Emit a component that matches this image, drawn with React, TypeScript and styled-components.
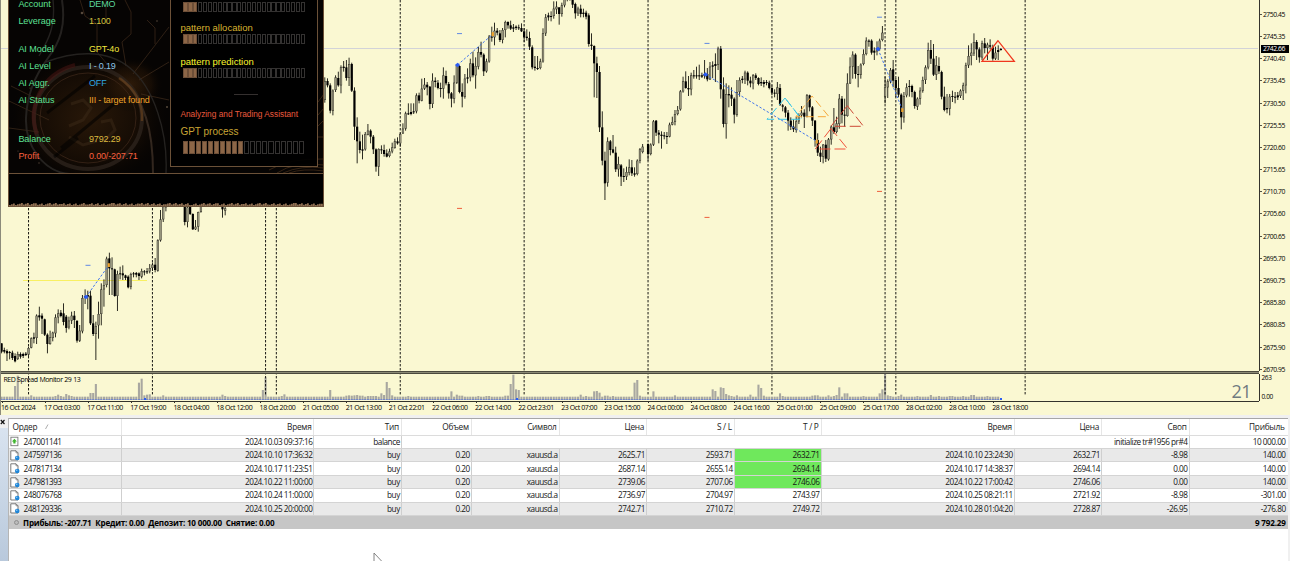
import React from 'react';
import styled, { createGlobalStyle } from 'styled-components';

type Bar = [number, number, number, number];

interface Segment {
    start: number;
    base: number;
    bars: Bar[];
}

interface HistoryRow {
    order: string;
    openTime: string;
    type: string;
    volume: string;
    symbol: string;
    openPrice: string;
    sl: string;
    tp: string;
    closeTime: string;
    closePrice: string;
    swap: string;
    profit: string;
    hit?: boolean;
}

const BAR_STEP = 2.6935;
const BAR_OFFSET = 1.6;
const PLOT_WIDTH = 1257;
const PRICE_HEIGHT = 371;
const SPREAD_HEIGHT = 27;

const barX = (index: number) => BAR_OFFSET + index * BAR_STEP - 1;

// high, low, open, close in thirds of a pixel from the top of the plot
const segments: Segment[] = [
    {
        start: 0,
        base: 600,
        bars: [
            [430, 460, 430, 455], [443, 460, 450, 455], [448, 483, 453, 460], [453, 478, 456, 458], [452, 480, 458, 474],
            [460, 487, 468, 484], [455, 480, 477, 462], [457, 476, 462, 470], [458, 474, 468, 462], [456, 468, 465, 461],
            [440, 468, 464, 444], [412, 445, 443, 415], [398, 430, 416, 412], [343, 432, 414, 347], [320, 362, 346, 352],
            [340, 402, 347, 356], [356, 408, 358, 404], [400, 460, 404, 432], [392, 434, 432, 412], [395, 424, 414, 398],
            [343, 412, 400, 352], [328, 370, 352, 340], [330, 352, 338, 348], [310, 376, 340, 366], [345, 398, 350, 384],
            [350, 388, 382, 362], [335, 372, 362, 347], [333, 384, 347, 360], [362, 428, 362, 422], [375, 426, 422, 392],
            [285, 400, 394, 294], [268, 312, 292, 288], [272, 328, 290, 285], [272, 375, 287, 370], [345, 408, 370, 402],
            [365, 480, 402, 378], [305, 416, 376, 342], [250, 376, 342, 268], [238, 320, 268, 255], [170, 262, 255, 176],
            [158, 285, 175, 205], [172, 285, 205, 206], [206, 290, 208, 288], [212, 333, 288, 222], [200, 238, 222, 220],
            [196, 240, 220, 226], [224, 240, 226, 234], [226, 265, 230, 262], [218, 268, 260, 222], [216, 232, 222, 220],
            [216, 232, 219, 224], [217, 240, 220, 228], [206, 235, 230, 213], [210, 226, 214, 216], [204, 222, 216, 214],
            [192, 220, 214, 204], [188, 213, 204, 194], [174, 217, 194, 210], [118, 215, 212, 121], [30, 125, 121, 58],
            [0, 66, 58, 20], [0, 34, 22, 10],
        ],
    },
    {
        start: 68,
        base: 600,
        bars: [
            [0, 76, 0, 66], [20, 82, 66, 22], [0, 45, 0, 42], [40, 90, 42, 88], [60, 90, 88, 80], [35, 95, 80, 36], [0, 38, 36, 0],
        ],
    },
    { start: 82, base: 600, bars: [[0, 53, 0, 28], [20, 46, 32, 25]] },
    {
        start: 120,
        base: 0,
        bars: [
            [232, 308, 300, 243], [235, 262, 243, 256], [250, 340, 256, 332], [268, 346, 332, 272], [226, 276, 270, 232],
            [215, 260, 234, 256], [196, 280, 256, 202], [183, 215, 204, 200], [180, 242, 202, 234], [173, 258, 234, 192],
            [188, 276, 192, 272], [262, 420, 272, 380], [352, 490, 380, 424], [395, 460, 424, 450], [404, 478, 452, 448],
            [396, 452, 448, 402], [372, 406, 404, 392], [388, 430, 392, 410], [405, 462, 410, 448], [445, 515, 448, 500],
            [445, 528, 500, 447], [436, 462, 450, 448], [434, 470, 450, 462], [448, 472, 460, 470], [446, 472, 468, 454],
            [428, 460, 454, 442], [416, 446, 444, 424], [412, 434, 424, 430], [398, 440, 430, 402], [370, 402, 400, 386],
            [335, 392, 386, 340], [310, 345, 340, 340], [310, 346, 342, 336], [310, 342, 336, 334], [280, 340, 334, 286],
            [278, 310, 286, 302], [236, 304, 302, 266], [234, 270, 266, 254], [246, 286, 254, 262], [258, 328, 260, 312],
            [220, 324, 312, 242], [232, 262, 242, 246], [240, 268, 248, 264], [248, 292, 264, 266], [202, 296, 266, 226],
            [212, 256, 228, 250], [246, 296, 252, 280], [276, 322, 280, 296], [226, 310, 296, 248], [192, 252, 248, 196],
            [196, 280, 198, 276], [250, 322, 276, 290], [222, 296, 290, 236], [205, 250, 236, 232], [176, 244, 232, 190],
            [155, 232, 190, 226], [172, 266, 226, 198], [140, 208, 200, 156], [125, 172, 156, 164], [160, 228, 164, 214],
            [176, 218, 214, 184], [105, 188, 184, 110], [80, 125, 110, 112], [68, 136, 112, 92], [84, 106, 92, 98],
            [90, 126, 100, 120], [84, 130, 120, 90], [62, 112, 90, 66], [64, 86, 66, 76], [62, 90, 76, 86],
            [72, 96, 86, 82], [76, 90, 84, 80], [74, 90, 82, 84], [70, 96, 84, 94], [84, 126, 94, 112],
            [88, 122, 110, 114], [95, 150, 114, 140], [136, 208, 142, 202], [168, 212, 204, 200], [168, 210, 204, 206],
            [176, 208, 204, 184], [85, 188, 184, 100], [42, 108, 100, 52], [38, 62, 52, 46], [34, 64, 48, 48],
            [4, 56, 48, 26], [4, 42, 28, 20], [22, 74, 22, 42], [8, 50, 42, 16], [-10, 22, 16, -4],
            [-20, 4, -4, -14], [-30, 2, -14, -20], [-6, 24, -4, 14], [8, 56, 12, 40], [20, 48, 40, 26],
            [14, 52, 26, 42], [26, 52, 42, 38], [32, 58, 38, 50], [40, 140, 46, 132], [100, 150, 134, 138],
            [136, 292, 138, 190], [170, 294, 190, 216], [198, 396, 216, 382], [334, 496, 382, 482], [455, 600, 482, 550],
            [412, 560, 548, 424], [420, 466, 424, 450], [405, 460, 448, 458], [440, 516, 458, 508], [470, 530, 508, 492],
            [492, 558, 496, 530], [505, 546, 528, 530], [500, 540, 530, 516], [478, 526, 518, 502], [480, 528, 502, 520],
            [502, 530, 520, 524], [478, 526, 522, 482], [444, 490, 482, 448], [432, 460, 456, 440],
        ],
    },
    {
        start: 240,
        base: 0,
        bars: [
            [430, 482, 432, 462], [430, 466, 462, 434], [360, 438, 434, 364], [360, 408, 362, 398], [390, 430, 398, 404],
            [394, 446, 404, 408], [396, 418, 406, 408], [396, 432, 408, 410], [368, 412, 410, 374], [350, 376, 374, 366],
            [330, 376, 366, 342], [318, 346, 342, 330], [270, 332, 328, 274], [230, 278, 274, 244], [214, 266, 244, 264],
            [228, 288, 264, 268], [218, 286, 268, 226], [210, 236, 226, 228], [200, 236, 228, 226], [194, 240, 228, 226],
            [218, 234, 226, 230], [180, 236, 228, 222], [204, 244, 222, 238], [186, 240, 238, 200], [184, 234, 200, 196],
            [160, 246, 198, 192], [140, 210, 194, 146], [138, 296, 146, 268], [232, 382, 268, 372], [250, 416, 372, 282],
            [256, 322, 282, 286], [262, 318, 284, 296], [292, 370, 296, 344], [240, 350, 344, 276], [232, 290, 276, 240],
            [228, 250, 240, 236], [212, 252, 238, 218], [214, 256, 218, 242], [230, 262, 242, 250], [222, 268, 250, 226],
            [220, 240, 226, 234], [232, 256, 234, 252], [232, 258, 250, 246], [240, 262, 246, 252], [240, 256, 248, 246],
            [242, 268, 248, 264], [256, 286, 264, 278], [268, 292, 278, 280], [246, 300, 282, 262], [252, 318, 264, 314],
            [312, 334, 316, 320], [318, 352, 322, 338], [330, 392, 338, 362], [352, 390, 362, 380], [358, 396, 380, 388],
            [350, 398, 390, 364], [340, 372, 364, 346], [318, 352, 346, 338], [328, 384, 338, 350], [282, 352, 350, 286],
            [284, 334, 286, 322], [318, 378, 322, 362], [360, 440, 362, 420], [400, 468, 420, 458], [440, 486, 458, 470],
            [432, 490, 470, 434], [420, 486, 434, 476], [414, 482, 478, 418], [376, 434, 418, 380], [324, 402, 382, 396],
            [350, 400, 396, 370], [282, 386, 372, 296], [288, 370, 296, 344], [296, 380, 344, 346], [220, 350, 348, 250],
            [172, 252, 250, 200], [154, 236, 200, 164], [160, 236, 164, 222], [198, 262, 222, 224], [190, 236, 224, 194],
            [148, 196, 192, 162], [112, 166, 162, 122], [118, 140, 122, 124], [118, 164, 122, 158], [142, 180, 158, 152],
            [124, 166, 154, 144], [116, 152, 146, 122], [78, 124, 120, 98], [230, 310, 290, 262], [238, 294, 262, 244],
            [204, 250, 244, 210], [180, 262, 208, 242], [234, 292, 240, 264], [230, 292, 264, 284], [280, 388, 284, 352],
            [276, 368, 352, 288], [250, 292, 286, 262], [240, 290, 260, 258], [254, 292, 258, 276], [272, 326, 276, 318],
            [292, 330, 320, 296], [262, 314, 296, 272], [230, 278, 272, 240], [196, 252, 240, 202], [128, 208, 202, 150],
            [120, 192, 150, 176], [132, 228, 176, 224], [168, 240, 224, 196], [172, 222, 198, 214], [212, 298, 216, 290],
            [260, 334, 290, 330], [282, 340, 328, 324], [282, 346, 326, 290], [272, 306, 290, 288], [276, 310, 290, 292],
            [276, 300, 292, 286], [268, 294, 288, 272], [248, 300, 272, 256], [188, 280, 256, 196], [136, 204, 196, 168],
            [130, 196, 168, 158], [100, 168, 160, 126], [120, 180, 126, 148], [142, 188, 148, 172], [122, 180, 172, 130],
            [114, 160, 130, 144], [128, 180, 144, 134], [118, 148, 136, 140], [134, 182, 142, 176], [140, 180, 176, 158],
            [136, 180, 156, 150], [144, 152, 147, 149],
        ],
    },
];

// bars of the spread indicator that rise over the flat level
const spreadPeaks: { [index: number]: number } = {
    5: 42, 6: 73, 11: 14, 20: 12, 21: 16, 22: 12, 24: 18, 25: 14, 26: 12, 33: 21, 34: 21, 35: 48, 51: 52, 52: 64, 53: 14,
    54: 16, 55: 17, 60: 14, 82: 16, 83: 12, 97: 30, 98: 68, 104: 12, 105: 17, 122: 30, 128: 13, 129: 14, 130: 13, 131: 14,
    132: 15, 133: 13, 134: 13, 136: 12, 137: 12, 138: 12, 139: 12, 141: 20, 142: 15, 143: 54, 144: 36, 145: 14, 151: 12,
    167: 26, 169: 16, 170: 13, 171: 13, 177: 12, 180: 12, 181: 12, 187: 13, 188: 13, 189: 48, 190: 76, 191: 32, 192: 30,
    215: 16, 217: 12, 220: 26, 221: 27, 222: 22, 224: 13, 225: 13, 227: 12, 235: 52, 236: 60, 237: 13, 242: 26, 250: 14,
    264: 32, 265: 27, 267: 38, 268: 36, 269: 18, 270: 14, 271: 12, 273: 14, 278: 16, 281: 46, 282: 36, 283: 13, 289: 20,
    290: 12, 301: 13, 302: 14, 303: 14, 307: 14, 309: 12, 310: 15, 311: 38, 313: 20, 314: 20, 320: 12, 326: 20, 327: 32,
    328: 81, 329: 14, 330: 12, 333: 12, 334: 16, 340: 12, 345: 15, 348: 12, 352: 12, 353: 12, 357: 12, 360: 15, 361: 15,
    366: 12,
};

const periods = [10, 56, 98, 102, 148, 194, 240, 286, 328, 332, 380];

const priceLabels = [
    '2750.45', '2745.35', '2740.40', '2735.45', '2730.50', '2725.55', '2720.60', '2715.65', '2710.70',
    '2705.60', '2700.65', '2695.70', '2690.75', '2685.80', '2680.85', '2675.90', '2670.95',
];

const timeLabels = [
    '16 Oct 2024', '17 Oct 03:00', '17 Oct 11:00', '17 Oct 19:00', '18 Oct 04:00', '18 Oct 12:00', '18 Oct 20:00',
    '21 Oct 05:00', '21 Oct 13:00', '21 Oct 22:01', '22 Oct 06:00', '22 Oct 14:00', '22 Oct 23:01', '23 Oct 07:00',
    '23 Oct 15:00', '24 Oct 00:00', '24 Oct 08:00', '24 Oct 16:00', '25 Oct 01:00', '25 Oct 09:00', '25 Oct 17:00',
    '28 Oct 02:00', '28 Oct 10:00', '28 Oct 18:00',
];

const trades = [
    { from: [86, 297], to: [109, 265] },
    { from: [457.5, 65], to: [493, 34] },
    { from: [705.5, 74.5], to: [817, 141.5] },
    { from: [878, 49], to: [902.5, 110] },
];

const rows: HistoryRow[] = [
    { order: '247597136', openTime: '2024.10.10 17:36:32', type: 'buy', volume: '0.20', symbol: 'xauusd.a', openPrice: '2625.71', sl: '2593.71', tp: '2632.71', closeTime: '2024.10.10 23:24:30', closePrice: '2632.71', swap: '-8.98', profit: '140.00', hit: true },
    { order: '247817134', openTime: '2024.10.17 11:23:51', type: 'buy', volume: '0.20', symbol: 'xauusd.a', openPrice: '2687.14', sl: '2655.14', tp: '2694.14', closeTime: '2024.10.17 14:38:37', closePrice: '2694.14', swap: '0.00', profit: '140.00', hit: true },
    { order: '247981393', openTime: '2024.10.22 11:00:00', type: 'buy', volume: '0.20', symbol: 'xauusd.a', openPrice: '2739.06', sl: '2707.06', tp: '2746.06', closeTime: '2024.10.22 17:00:42', closePrice: '2746.06', swap: '0.00', profit: '140.00', hit: true },
    { order: '248076768', openTime: '2024.10.24 11:00:00', type: 'buy', volume: '0.20', symbol: 'xauusd.a', openPrice: '2736.97', sl: '2704.97', tp: '2743.97', closeTime: '2024.10.25 08:21:11', closePrice: '2721.92', swap: '-8.98', profit: '-301.00' },
    { order: '248129336', openTime: '2024.10.25 20:00:00', type: 'buy', volume: '0.20', symbol: 'xauusd.a', openPrice: '2742.71', sl: '2710.72', tp: '2749.72', closeTime: '2024.10.28 01:04:20', closePrice: '2728.87', swap: '-26.95', profit: '-276.80' },
];

const headers = ['Время', 'Тип', 'Объем', 'Символ', 'Цена', 'S / L', 'T / P', 'Время', 'Цена', 'Своп', 'Прибыль'];

const GlobalStyle = createGlobalStyle`
    * {
        box-sizing: border-box;
    }

    body {
        margin: 0;
        background: #f0f0f0;
        overflow: hidden;
        font-family: 'Open Sans', 'Noto Sans', sans-serif;
    }

    svg {
        display: block;
    }
`;

const Terminal = styled.div`
    display: flex;
    flex-direction: column;
    width: 1290px;
    height: 561px;
    overflow: hidden;
`;

const Chart = styled.section`
    position: relative;
    display: grid;
    grid-template-columns: 1256.5px 1fr;
    grid-template-rows: 371px 3px 27px 1fr;
    flex: 0 0 415px;
    padding-left: 1px;
    border-left: 1px solid #8c8b7b;
    background: #faf8d2;
`;

const Plot = styled.div`
    position: relative;
    margin-left: -1px;
`;

const PriceAxis = styled.div`
    position: relative;
    padding-top: 3.2px;
    border-left: 1px solid #33332c;
`;

const PriceLabel = styled.div`
    display: flex;
    align-items: center;
    height: 22.2px;
    font-size: 6.8px;
    font-weight: 500;
    letter-spacing: -0.42px;
    color: #000;
    white-space: nowrap;

    &::before {
        content: '';
        width: 2px;
        height: 1px;
        margin-right: 1.4px;
        background: #55554a;
    }
`;

const CurrentPrice = styled.div`
    position: absolute;
    left: 1px;
    top: 45px;
    width: 28px;
    height: 8px;
    padding-left: 2.4px;
    background: #000;
    color: #fff;
    font-size: 6.8px;
    font-weight: 500;
    line-height: 7.5px;
    letter-spacing: -0.42px;
`;

const Splitter = styled.div`
    grid-column: 1 / -1;
    margin-left: -1px;
    width: 1258px;
    background: #8b8a76;
    border-top: 1px solid #4b4a3e;
    border-bottom: 1px solid #4b4a3e;
`;

const IndicatorName = styled.span`
    position: absolute;
    left: 2.4px;
    top: 0.5px;
    font-size: 7px;
    font-weight: 500;
    line-height: 9px;
    letter-spacing: -0.42px;
    word-spacing: 0.3px;
    color: #000;
`;

const SpreadValue = styled.span`
    position: absolute;
    right: 7.5px;
    top: 3.5px;
    font-size: 18px;
    line-height: 26px;
    letter-spacing: -0.6px;
    color: #6f7a80;
`;

const SpreadAxis = styled.div`
    display: flex;
    flex-direction: column;
    justify-content: space-between;
    height: 27px;
    padding-left: 2px;
    border-left: 1px solid #33332c;
    font-size: 6.5px;
    font-weight: 500;
    line-height: 8px;
    letter-spacing: -0.35px;
    color: #000;
`;

const TimeAxis = styled.div`
    display: flex;
    width: 1258px;
    margin-left: -1px;
    border-top: 1px solid #33332c;
`;

const TimeLabel = styled.div`
    flex: 0 0 43.1px;
    font-size: 7px;
    font-weight: 500;
    line-height: 9.6px;
    letter-spacing: -0.42px;
    color: #000;
    white-space: nowrap;

    &::before {
        content: '';
        display: block;
        width: 1px;
        height: 1px;
        margin-left: 0.6px;
        background: #33332c;
    }
`;

const Assistant = styled.div`
    position: absolute;
    left: 7.4px;
    top: 0;
    display: flex;
    flex-direction: column;
    width: 316px;
    height: 207px;
    background: #000;
    border: 1px solid #6b5138;
    border-top: 0;
    font-family: 'Liberation Sans', Arial, sans-serif;
`;

const AssistantBody = styled.div`
    position: relative;
    display: flex;
    flex: 0 0 174px;
    border-bottom: 1px solid #6b5138;
    overflow: hidden;
`;

const Backdrop = styled.svg`
    position: absolute;
    left: 0;
    top: 0;
`;

const Info = styled.dl`
    position: relative;
    display: flex;
    flex-direction: column;
    width: 160.6px;
    margin: 0;
    padding: 0 0 0 9px;
`;

const InfoRow = styled.div<{ gap?: number; color: string }>`
    display: grid;
    grid-template-columns: 70.6px 1fr;
    height: 17px;
    margin-top: ${props => props.gap || 0}px;
    font-size: 9px;
    line-height: 17px;
    letter-spacing: -0.04px;
    color: ${props => props.color};
    white-space: nowrap;
`;

const InfoValue = styled.dd<{ color: string }>`
    margin: 0;
    color: ${props => props.color};
    letter-spacing: -0.16px;
`;

const Stages = styled.div`
    position: relative;
    display: flex;
    flex-direction: column;
    width: 148.4px;
    height: 167px;
    padding: 2.4px 11.4px 0 9.4px;
    background: rgba(0, 0, 0, 0.93);
    border: 1px solid #6b5138;
    border-top: 0;
`;

const StageName = styled.div<{ color: string; size: number; top: number }>`
    margin-top: ${props => props.top}px;
    font-size: ${props => props.size}px;
    line-height: 12px;
    color: ${props => props.color};
    white-space: nowrap;
`;

const Meter = styled.div<{ tall?: boolean }>`
    display: flex;
    gap: ${props => (props.tall ? 1 : 0.6)}px;
    height: ${props => (props.tall ? 13 : 10)}px;
    margin: ${props => (props.tall ? '2.5px 2px 0 3px' : '0 1px 0 3px')};
`;

const Cell = styled.i<{ filled: boolean }>`
    flex: 1;
    background: ${props => (props.filled ? '#8c6647' : 'transparent')};
    border: 1px solid ${props => (props.filled ? '#6d4f38' : '#343231')};
    border-width: 1px 0.6px;
`;

const Divider = styled.hr`
    width: 24px;
    height: 1px;
    margin: 15.6px 0 0 54px;
    border: 0;
    background: #35302f;
`;

const Footer = styled.div`
    display: flex;
    flex: 1;
    align-items: flex-end;
`;

const History = styled.section`
    display: flex;
    flex: 1;
    padding-top: 3px;
    padding-right: 2px;
`;

const Gutter = styled.div`
    display: flex;
    flex-direction: column;
    flex: 0 0 8px;
    background: linear-gradient(#dbe5f1, #b9c9dc);
`;

const CloseBox = styled.div`
    height: 10px;
    background: #f0f0f0;

    svg {
        margin-top: 1px;
    }
`;

const Table = styled.div`
    flex: 1;
    border-top: 1px solid #a6a6a6;
    border-left: 1px solid #b5b5b5;
    background: #fff;
`;

const columns = '112.7px 192.8px 87.3px 70px 87.8px 87.5px 87.7px 86.8px 193.2px 87.3px 87.5px 1fr';

const HeaderRow = styled.div`
    display: grid;
    grid-template-columns: ${columns};
    height: 16.6px;
    border-bottom: 1px solid #dcdcdc;
`;

const HeaderCell = styled.div<{ first?: boolean }>`
    display: flex;
    align-items: center;
    justify-content: ${props => (props.first ? 'flex-start' : 'flex-end')};
    gap: 8px;
    padding: 0 2px 0 3.6px;
    border-right: 1px solid #e6e6e6;
    font-size: 8.3px;
    letter-spacing: -0.28px;
    color: #222;
    white-space: nowrap;

    &:last-child {
        padding-right: 3.5px;
        border-right: 0;
    }
`;

const Row = styled.div<{ shaded?: boolean }>`
    display: grid;
    grid-template-columns: ${columns};
    height: 13.43px;
    background: ${props => (props.shaded ? '#e9e9e9' : '#fff')};
    border-bottom: 1px solid #d4d4d4;
`;

const TableCell = styled.div<{ start?: boolean; span?: number; hit?: boolean }>`
    display: flex;
    align-items: center;
    justify-content: ${props => (props.start ? 'flex-start' : 'flex-end')};
    grid-column: span ${props => props.span || 1};
    gap: 3.4px;
    padding: 0 1px 0 1.2px;
    background: ${props => (props.hit ? '#6fe85c' : 'transparent')};
    border-right: 1px solid #cfcfcf;
    font-size: 8.2px;
    line-height: 12px;
    letter-spacing: -0.46px;
    color: #141414;
    white-space: nowrap;

    &:last-child {
        padding-right: 2.4px;
        border-right: 0;
    }
`;

const Summary = styled.div`
    display: flex;
    align-items: center;
    height: 13px;
    padding: 0 2.4px 0 4.5px;
    background: #c6c6c6;
    font-size: 8.1px;
    font-weight: 700;
    letter-spacing: -0.2px;
    color: #000;
    white-space: pre;
`;

const Dot = styled.i`
    width: 5px;
    height: 5px;
    margin-right: 4.6px;
    border: 1px solid #8f8f8f;
    border-radius: 50%;
    background: #bbb;
`;

const SummaryTotal = styled.span`
    margin-left: auto;
`;

const Pointer = styled.svg`
    position: absolute;
    left: 373px;
    top: 552px;
`;

const Periods = ({ height, offset = 0 }: { height: number; offset?: number }) => (
    <g stroke="#000" strokeOpacity={0.9} strokeDasharray="2.4 1.6" strokeDashoffset={offset}>
        {periods.map(index => (
            <line key={index} x1={barX(index)} x2={barX(index)} y1={0} y2={height} />
        ))}
    </g>
);

const Candle = ({ x, bar, base }: { x: number; bar: Bar; base: number }) => {
    const [high, low, open, close] = bar.map(value => (value + base) / 3);
    const top = Math.min(open, close);
    const height = Math.max(Math.abs(open - close), 1);
    const rising = close < open;

    return (
        <g>
            <rect x={x - 0.45} y={high} width={0.9} height={low - high} fill="#16160f" />
            <rect x={x - 1.1} y={top} width={2.2} height={height} fill={rising && height > 2 ? '#2c2b22' : '#000'} />
            {rising && height > 2 && <rect x={x - 0.65} y={top + 0.5} width={1.5} height={height - 1} fill="#96947c" />}
        </g>
    );
};

const PriceChart = () => (
    <svg width={PLOT_WIDTH} height={PRICE_HEIGHT}>
        <line x1={0} x2={PLOT_WIDTH} y1={48.5} y2={48.5} stroke="#d2d3d8" />
        <line x1={22} x2={146} y1={280.5} y2={280.5} stroke="#f8f062" />
        <Periods height={PRICE_HEIGHT} />
        {segments.map(segment => segment.bars.map((bar, i) => (
            <Candle key={segment.start + i} x={barX(segment.start + i)} bar={bar} base={segment.base} />
        )))}
        <g transform="translate(-1 0)">
            {trades.map(({ from, to }) => (
                <g key={from[0]}>
                    <line x1={from[0]} y1={from[1]} x2={to[0]} y2={to[1]} stroke="#3f74ec" strokeDasharray="2.4 1.8" />
                    <path d={`M${from[0] - 2.6} ${from[1]}l2.6-2.3 2.6 2.3-2.6 2.3z`} fill="#2a5cf4" />
                    <path d={`M${to[0] - 1.3} ${to[1] - 1.8}h2.2v3.8h-2.2z`} fill="#f0a42c" />
                </g>
            ))}
            <path d="M85.500 265.300h5M457 33.600h5M704.500 43.400h5M877 17.200h5" stroke="#5f88e4" />
            <path d="M457 208.400h5M704.500 217.400h5M877 191.400h5" stroke="#ee5f3e" />
            <g fill="none">
                <path d="M785 98l-18 21.300h34.500zM785 98l16.500 21" stroke="#3cc6e6" strokeDasharray="9 4" />
                <path d="M812 96l-16 20.700h33z" stroke="#f5a83a" strokeDasharray="8 4" />
                <path d="M847.300 105.700l-16.300 20.600h32.500z" stroke="#cc4936" strokeDasharray="11 4" />
                <path d="M831 128.500l-15.700 20.500h32.400z" stroke="#f0513a" strokeDasharray="11 4" />
                <path d="M998 40.700l-16 20.700h32.300z" stroke="#f0371e" strokeWidth={1.3} />
            </g>
        </g>
    </svg>
);

const SpreadChart = () => (
    <svg width={PLOT_WIDTH} height={SPREAD_HEIGHT}>
        {Array.from({ length: 371 }, (_, index) => {
            const height = (spreadPeaks[index] || 10) / 3;
            return (
                <g key={index}>
                    <rect x={barX(index) - 1.05} y={26 - height} width={2.1} height={height} fill="#a8a7a0" />
                    <rect x={barX(index) - 1.05} y={25.1} width={2.1} height={0.9} fill="#6d84d0" />
                </g>
            );
        })}
        <path d="M143 24h2v2h-2zM515 24h2v2h-2zM999 24h2v2h-2z" fill="#2d5ff0" />
        <Periods height={22} offset={374} />
    </svg>
);

const CoinBackdrop = () => (
    <Backdrop width={315} height={173} fill="none">
        <defs>
            <radialGradient id="glow">
                <stop offset="0" stopColor="#4a2b0e" stopOpacity={0.5} />
                <stop offset="0.6" stopColor="#241406" stopOpacity={0.5} />
                <stop offset="1" stopColor="#000" stopOpacity={0} />
            </radialGradient>
        </defs>
        <rect width={315} height={173} fill="#060403" />
        <ellipse cx={80} cy={118} rx={85} ry={72} fill="url(#glow)" />
        <ellipse cx={122} cy={84} rx={34} ry={28} fill="url(#glow)" />
        <g stroke="#4a3220" strokeOpacity={0.6}>
            <path d="M71 0l5 16 12 8v28l10 12M116 0l6 12v22l-9 8 4 24M97 0v18M124 74l36-47M130 80l30-18M132 94l28 6" />
            <path d="M0 101l40 19M0 128l30 4M2 86l30 15M138 20l8 8v16" />
        </g>
        <g stroke="#2c2927" strokeWidth={2} strokeOpacity={0.8}>
            <path d="M53 0c4 26-2 42-14 58S18 92 17 118s16 54 44 56" />
            <path d="M44 0c3 28-6 42-14 56M37 62c26-10 60-14 84 6s38 64 36 105" strokeWidth={1.4} />
            <path d="M112 78c24 22 32 52 32 95" stroke="#3d3025" />
        </g>
        <ellipse cx={79} cy={118} rx={54} ry={51} stroke="#30261f" strokeWidth={4} strokeOpacity={0.7} />
        <ellipse cx={79} cy={118} rx={48} ry={45} stroke="#402a1b" strokeOpacity={0.7} />
        <path d="M28 134c-10-26 4-60 38-69" stroke="#4c1614" strokeWidth={4} strokeOpacity={0.5} />
        <path d="M110 78c15 10 24 24 23 43" stroke="#76491e" strokeWidth={2.500} strokeOpacity={0.55} />
        <g stroke="#3b2917" strokeWidth={3} strokeOpacity={0.5}>
            <path d="M62 104l12-4 8 8-8 12-14 6M92 122l10-2 4 10-12 12M60 137l14 8 14-4" />
        </g>
        <path d="M45 157l24-19M38 113l48-37M52 148l58-48" stroke="#000" strokeWidth={3} strokeOpacity={0.55} />
        <g stroke="#5a3c20" strokeOpacity={0.7} strokeWidth={0.8}>
            <path d="M268 173q18-12 47-8M274 173q18-8 41-5M260 170q20-12 55-11M280 173q14-5 35-2M309 115l6-7M309 126l6-6M309 137h6M309 102l6-8" />
        </g>
        <g fill="#8a7760" fillOpacity={0.6}>
            <circle cx={73} cy={13} r={1.3} />
            <circle cx={9} cy={151} r={0.6} />
            <circle cx={30} cy={163} r={0.7} />
            <circle cx={148} cy={21} r={0.8} />
            <circle cx={158} cy={107} r={1} />
            <circle cx={21} cy={88} r={0.6} />
        </g>
    </Backdrop>
);

const NoiseLine = () => (
    <svg width={314} height={4}>
        {Array.from({ length: 157 }, (_, i) => {
            const height = 1 + ((i * 7 + (i % 5) * 11 + (i % 13) * 3) % 9) / 4;
            return <rect key={i} x={i * 2} y={4 - height} width={1.8} height={height} fill="#8f6f52" />;
        })}
    </svg>
);

const Progress = ({ total, done, tall }: { total: number; done: number; tall?: boolean }) => (
    <Meter tall={tall || undefined}>
        {Array.from({ length: total }, (_, i) => <Cell key={i} filled={i < done} />)}
    </Meter>
);

const OrderIcon = () => (
    <svg width={10} height={11} viewBox="0 0 10 11" fill="none">
        <path d="M.8.800h5.200l2 2v7.200H.800z" fill="#fff" stroke="#6c6c6c" strokeWidth={0.9} />
        <path d="M6 .800v2h2" stroke="#6c6c6c" strokeWidth={0.7} />
        <circle cx={7.200} cy={8} r={2.300} fill="#1f86d8" />
        <circle cx={6.700} cy={7.300} r={0.800} fill="#8ccaf5" />
    </svg>
);

const BalanceIcon = () => (
    <svg width={10} height={11} viewBox="0 0 10 11" fill="none">
        <rect x={0.900} y={1.200} width={7} height={8.500} fill="#fff" stroke="#777" strokeWidth={0.9} />
        <path d="M4.400 2.800l2.500 2.700H5.500v2H3.300v-2H1.900z" fill="#3eb52c" />
    </svg>
);

const AssistantPanel = () => (
    <Assistant>
        <AssistantBody>
            <CoinBackdrop />
            <Info>
                {[
                    ['Account', 'DEMO', '#5ee294', '#5cd69c', -4],
                    ['Leverage', '1:100', '#5ee294', '#d8c440', 0],
                    ['AI Model', 'GPT-4o', '#5ee294', '#f0e53c', 11],
                    ['AI Level', 'I - 0.19', '#5ee294', '#8ec4e6', 0],
                    ['AI Aggr.', 'OFF', '#5ee294', '#30a6e2', 0],
                    ['AI Status', 'III - target found', '#5ee294', '#f0a42a', 0],
                    ['Balance', '9792.29', '#5ee294', '#dcba40', 22],
                    ['Profit', '0.00/-207.71', '#f8603f', '#f8603f', 0],
                ].map(([name, value, color, valueColor, gap]) => (
                    <InfoRow key={name} color={color as string} gap={gap as number}>
                        <dt>{name}</dt>
                        <InfoValue color={valueColor as string}>{value}</InfoValue>
                    </InfoRow>
                ))}
            </Info>
            <Stages>
                <Progress total={25} done={3} />
                <StageName color="#d8b430" size={9.5} top={10}>pattern allocation</StageName>
                <Progress total={25} done={3} />
                <StageName color="#fcf62e" size={9.5} top={11.8}>pattern prediction</StageName>
                <Progress total={25} done={3} />
                <Divider />
                <StageName color="#ea5a3e" size={8.3} top={13.6}>Analyzing and Trading Assistant</StageName>
                <StageName color="#c8a534" size={10} top={5.8}>GPT process</StageName>
                <Progress total={20} done={10} tall />
            </Stages>
        </AssistantBody>
        <Footer>
            <NoiseLine />
        </Footer>
    </Assistant>
);

const OrdersHistory = () => (
    <Table>
        <HeaderRow>
            <HeaderCell first>Ордер <svg width={4} height={6}><path d="M.5 5L3 .5" stroke="#888" strokeWidth={0.7} /></svg></HeaderCell>
            {headers.map((title, i) => <HeaderCell key={i}>{title}</HeaderCell>)}
        </HeaderRow>
        <Row>
            <TableCell start><BalanceIcon />247001141</TableCell>
            <TableCell>2024.10.03 09:37:16</TableCell>
            <TableCell>balance</TableCell>
            <TableCell span={8}>initialize tr#1956 pr#4</TableCell>
            <TableCell>10 000.00</TableCell>
        </Row>
        {rows.map((row, i) => (
            <Row key={row.order} shaded={i % 2 === 0}>
                <TableCell start><OrderIcon />{row.order}</TableCell>
                <TableCell>{row.openTime}</TableCell>
                <TableCell>{row.type}</TableCell>
                <TableCell>{row.volume}</TableCell>
                <TableCell>{row.symbol}</TableCell>
                <TableCell>{row.openPrice}</TableCell>
                <TableCell>{row.sl}</TableCell>
                <TableCell hit={row.hit}>{row.tp}</TableCell>
                <TableCell>{row.closeTime}</TableCell>
                <TableCell>{row.closePrice}</TableCell>
                <TableCell>{row.swap}</TableCell>
                <TableCell>{row.profit}</TableCell>
            </Row>
        ))}
        <Summary>
            <Dot />
            {'Прибыль: -207.71  Кредит: 0.00  Депозит: 10 000.00  Снятие: 0.00'}
            <SummaryTotal>9 792.29</SummaryTotal>
        </Summary>
    </Table>
);

const App = () => (
    <Terminal>
        <GlobalStyle />
        <Chart>
            <Plot><PriceChart /></Plot>
            <PriceAxis>
                {priceLabels.map(label => <PriceLabel key={label}>{label}</PriceLabel>)}
                <CurrentPrice>2742.66</CurrentPrice>
            </PriceAxis>
            <Splitter />
            <Plot>
                <SpreadChart />
                <IndicatorName>RED Spread Monitor 29 13</IndicatorName>
                <SpreadValue>21</SpreadValue>
            </Plot>
            <SpreadAxis>
                <span>263</span>
                <span>0.00</span>
            </SpreadAxis>
            <TimeAxis>
                {timeLabels.map(label => <TimeLabel key={label}>{label}</TimeLabel>)}
            </TimeAxis>
            <AssistantPanel />
        </Chart>
        <History>
            <Gutter>
                <CloseBox>
                    <svg width={6} height={6}><path d="M.8 1l3.700 4M4.500 1L.8 5" stroke="#111" strokeWidth={1.2} /></svg>
                </CloseBox>
            </Gutter>
            <OrdersHistory />
        </History>
        <Pointer width={10} height={12} viewBox="0 0 10 12">
            <path d="M1 1v11l3-2.500h5z" fill="#fff" stroke="#777" strokeWidth={0.900} />
        </Pointer>
    </Terminal>
);

export default App;
